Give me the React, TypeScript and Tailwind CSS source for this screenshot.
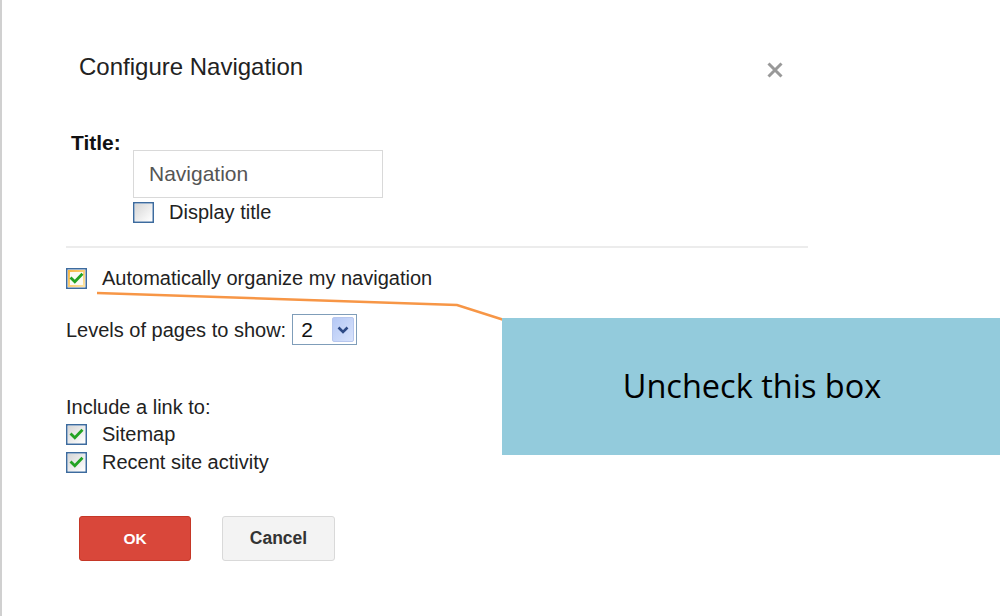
import React from "react";

function Box({ checked, hover }: { checked?: boolean; hover?: boolean }) {
  return (
    <svg width="21" height="21" viewBox="0 0 21 21" className="shrink-0">
      <defs>
        <linearGradient id="gb" x1="0" y1="0" x2="1" y2="1">
          <stop offset="0" stopColor="#d6d6d6" />
          <stop offset="1" stopColor="#ffffff" />
        </linearGradient>
        <linearGradient id="go" x1="0" y1="0" x2="1" y2="1">
          <stop offset="0" stopColor="#f7b540" />
          <stop offset="1" stopColor="#fde6a8" />
        </linearGradient>
      </defs>
      <rect x="0.75" y="0.75" width="19.5" height="19.5" fill="#fff" stroke="#3d6b9e" strokeWidth="1.5" />
      <rect x="2" y="2" width="17" height="17" fill={hover ? "url(#go)" : "url(#gb)"} />
      {hover && <rect x="4" y="4" width="13" height="13" fill="#fbfbf5" />}
      {checked && (
        <path d="M5.5 10.5 L8.8 13.8 L15.5 6.8" fill="none" stroke="#23a323" strokeWidth="2.8" strokeLinecap="square" />
      )}
    </svg>
  );
}

export default function App() {
  return (
    <div
      className="relative w-[1000px] h-[616px] overflow-hidden bg-white border-l-2 border-[#d0d0d0] text-[#222]"
      style={{ fontFamily: '"Liberation Sans", Arial, sans-serif' }}
    >
      <div className="pl-[64px] pt-[53px] w-[808px]">
        {/* header */}
        <div className="flex items-start justify-between">
          <div className="ml-[13px] text-[24px] leading-[28px] text-[#222]">Configure Navigation</div>
          <div className="mr-[26px] mt-[8px] text-[#999]">
            <svg width="18" height="18" viewBox="0 0 18 18">
              <path d="M2.5 2.5 L15.5 15.5 M15.5 2.5 L2.5 15.5" stroke="#999" strokeWidth="3" />
            </svg>
          </div>
        </div>

        {/* title block */}
        <div className="mt-[50px] flex">
          <div className="ml-[5px] text-[21px] font-bold leading-[24px] text-[#111]">Title:</div>
        </div>
        <div className="ml-[67px] -mt-[5px]">
          <div className="w-[250px] h-[48px] border border-[#d9d9d9] flex items-center pl-[15px] text-[21px] text-[#555]">
            Navigation
          </div>
          <div className="mt-[2px] flex items-center gap-[15px]">
            <Box />
            <span className="text-[20px] leading-[24px]">Display title</span>
          </div>
        </div>

        <div className="mt-[22px] h-[2px] bg-[#ececec] w-[742px]" />

        <div className="mt-[18px] flex items-center gap-[15px]">
          <Box checked hover />
          <span className="text-[20px] leading-[24px]">Automatically organize my navigation</span>
        </div>

        <div className="mt-[24px] flex items-center gap-[6px]">
          <span className="text-[20px] leading-[24px]">Levels of pages to show:</span>
          <div className="w-[65px] h-[31px] border border-[#7f9db9] flex items-center justify-between pl-[8px] pr-[2px] bg-white">
            <span className="text-[21px] leading-none text-[#111]">2</span>
            <div className="w-[22px] h-[25px] rounded-[2px] bg-gradient-to-br from-[#b5c8f5] to-[#d8e3fc] border border-[#b7c7ee] flex items-center justify-center">
              <svg width="12" height="8" viewBox="0 0 12 8">
                <path d="M1.5 1.5 L6 6 L10.5 1.5" fill="none" stroke="#2d4a86" strokeWidth="2.6" />
              </svg>
            </div>
          </div>
        </div>

        <div className="mt-[50px] text-[20px] leading-[24px]">Include a link to:</div>
        <div className="mt-[3px] flex items-center gap-[15px]">
          <Box checked />
          <span className="text-[20px] leading-[24px]">Sitemap</span>
        </div>
        <div className="mt-[4px] flex items-center gap-[15px]">
          <Box checked />
          <span className="text-[20px] leading-[24px]">Recent site activity</span>
        </div>

        <div className="mt-[42px] ml-[13px] flex gap-[31px]">
          <div className="w-[112px] h-[45px] rounded-[3px] bg-[#d9473a] border border-[#c53727] flex items-center justify-center text-white text-[15.5px] font-bold">
            OK
          </div>
          <div className="w-[113px] h-[45px] rounded-[3px] bg-[#f3f3f3] border border-[#d9d9d9] flex items-center justify-center text-[#333] text-[17.5px] font-bold">
            Cancel
          </div>
        </div>
      </div>

      {/* annotation line */}
      <svg className="absolute left-0 top-0" width="1000" height="616">
        <polyline points="95,293 455,305 502,320" fill="none" stroke="#f79646" strokeWidth="2.5" />
      </svg>

      {/* callout */}
      <div
        className="absolute left-[500px] top-[318px] w-[500px] h-[137px] bg-[#93cbdc] flex items-center justify-center text-black text-[32.5px]"
        style={{ fontFamily: '"Open Sans", "Noto Sans", sans-serif' }}
      >
        Uncheck this box
      </div>
    </div>
  );
}
